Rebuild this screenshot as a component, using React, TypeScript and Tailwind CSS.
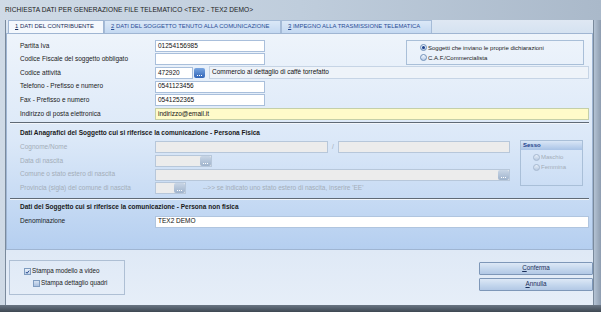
import React from "react";

const F = { fontFamily: '"Liberation Sans", Arial, sans-serif' };

function Input({ w, value, bg = "bg-white", border = "border-[#a9bfdb]", cls = "" }: { w?: string; value?: string; bg?: string; border?: string; cls?: string }) {
  return (
    <div className={`h-[12px] ${w ?? "flex-1"} ${bg} border ${border} flex items-center pl-[2px] text-[6.5px] text-[#111] leading-none ${cls}`}>
      {value}
    </div>
  );
}

function DotBtn({ disabled }: { disabled?: boolean }) {
  return (
    <div className={`w-[11px] h-[10px] rounded-[2px] flex items-end justify-center pb-[2px] ${disabled ? "bg-gradient-to-b from-[#c9d6e6] to-[#9fb3cc]" : "bg-gradient-to-b from-[#7aa6e0] to-[#2f64b8]"}`}>
      <div className="flex gap-[1px]">
        <div className="w-[1px] h-[1px] bg-white" />
        <div className="w-[1px] h-[1px] bg-white" />
        <div className="w-[1px] h-[1px] bg-white" />
      </div>
    </div>
  );
}

function Row({ label, children, disabled }: { label: string; children: React.ReactNode; disabled?: boolean }) {
  return (
    <div className="h-[13.6px] flex items-center">
      <div className={`w-[135px] text-[6.5px] leading-none ${disabled ? "text-[#a3adb8]" : "text-[#1a1a1a]"}`}>{label}</div>
      {children}
    </div>
  );
}

function Radio({ checked, disabled }: { checked?: boolean; disabled?: boolean }) {
  return (
    <div className={`w-[7px] h-[7px] rounded-full border ${disabled ? "border-[#a6b8cf] bg-gradient-to-b from-[#e6eef8] to-[#b9cbe2]" : "border-[#6e8fb8] bg-gradient-to-b from-[#f4f8fd] to-[#b7cbe6]"} flex items-center justify-center`}>
      {checked && <div className="w-[3px] h-[3px] rounded-full bg-[#1b3f8a]" />}
    </div>
  );
}

function Separator() {
  return (
    <div className="mx-[3px]">
      <div className="h-[1px] bg-[#5f6a76]" />
      <div className="h-[1px] bg-[#f2f6fb]" />
    </div>
  );
}

function Tab({ num, text, active, w }: { num: string; text: string; active?: boolean; w: string }) {
  return (
    <div
      className={`${w} h-[13px] flex items-center pl-[6px] text-[5.9px] leading-none border border-b-0 ${
        active ? "bg-[#f4f8fd] border-[#9fb5d2] text-[#1b2f5a]" : "bg-gradient-to-b from-[#dbe8f7] to-[#c3d8f1] border-[#a5bbd7] text-[#2a4e96] mt-[1px]"
      }`}
    >
      <span className="underline">{num}</span>
      <span>&nbsp;{text}</span>
    </div>
  );
}

export default function App() {
  return (
    <div style={F} className="w-[601px] h-[312px] overflow-hidden flex flex-col bg-gradient-to-r from-[#cfdae6] via-[#bfcddc] to-[#aab9ca]">
      {/* title bar */}
      <div className="h-[20px] flex items-center pl-[5px] text-[6.6px] text-[#1a1a1a] tracking-[0.05px]">
        RICHIESTA DATI PER GENERAZIONE FILE TELEMATICO &lt;TEX2 - TEX2 DEMO&gt;
      </div>
      <div className="flex-1 flex">
        {/* left frame */}
        <div className="w-[6px] flex">
          <div className="w-[5px]" />
          <div className="w-[1px] bg-[#7a8a9c]" />
        </div>
        <div className="w-[587px] flex flex-col bg-[#dde8f5]">
          {/* tabs */}
          <div className="h-[13px] flex items-end pl-[2px] bg-gradient-to-b from-[#dfe8f3] to-[#d5e2f1]">
            <Tab num="1" text="DATI DEL CONTRIBUENTE" active w="w-[96px]" />
            <Tab num="2" text="DATI DEL SOGGETTO TENUTO ALLA COMUNICAZIONE" w="w-[177px]" />
            <Tab num="3" text="IMPEGNO ALLA TRASMISSIONE TELEMATICA" w="w-[151px]" />
          </div>
          {/* panel */}
          <div className="h-[217px] border border-[#9fb5d2] bg-gradient-to-b from-[#eef4fb] via-[#dbe8f8] to-[#b5cff0] flex flex-col">
            {/* section 1 */}
            <div className="pl-[13px] pr-[3px] pt-[5px]">
              <div className="flex">
                <div className="flex flex-col">
                  <Row label="Partita Iva">
                    <Input w="w-[110px]" value="01254156985" />
                  </Row>
                  <Row label="Codice Fiscale del soggetto obbligato">
                    <Input w="w-[110px]" />
                  </Row>
                </div>
                <div className="ml-auto mr-[5px] mt-[1px] w-[178px] h-[25px] border border-[#a9bfd8] flex flex-col justify-center gap-[3px] pl-[13px]">
                  <div className="flex items-center gap-[1px] text-[6px] leading-none text-[#1a1a1a]">
                    <Radio checked />
                    <span>Soggetti che inviano le proprie dichiarazioni</span>
                  </div>
                  <div className="flex items-center gap-[1px] text-[6px] leading-none text-[#1a1a1a]">
                    <Radio />
                    <span>C.A.F./Commercialista</span>
                  </div>
                </div>
              </div>
              <Row label="Codice attività">
                <Input w="w-[38px]" value="472920" />
                <div className="ml-[1px] mr-[4px]"><DotBtn /></div>
                <div className="flex-1 h-[13px] -mt-[1px] border border-[#c6d4e5] bg-[#eef3f9] flex items-center pl-[2px] text-[6.5px] leading-none text-[#111]">
                  Commercio al dettaglio di caffè torrefatto
                </div>
              </Row>
              <Row label="Telefono - Prefisso e numero">
                <Input w="w-[110px]" value="0541123456" />
              </Row>
              <Row label="Fax - Prefisso e numero">
                <Input w="w-[110px]" value="0541252365" />
              </Row>
              <Row label="Indirizzo di posta elettronica">
                <Input bg="bg-[#fffbc9]" border="border-[#c4cfa8]" value="indirizzo@email.it" />
              </Row>
            </div>
            <div className="mt-[1px]"><Separator /></div>
            {/* section 2 */}
            <div className="pl-[13px] pr-[3px]">
              <div className="h-[19px] flex items-center text-[6.5px] font-bold leading-none text-[#1a1a1a]">
                Dati Anagrafici del Soggetto cui si riferisce la comunicazione - Persona Fisica
              </div>
              <div className="flex">
                <div className="w-[490px] flex flex-col -mt-[2px]">
                  <Row label="Cognome/Nome" disabled>
                    <Input w="w-[173px]" bg="bg-[#ececec]" border="border-[#b7c7da]" />
                    <div className="w-[10px] text-center text-[6.5px] text-[#a3adb8]">/</div>
                    <Input bg="bg-[#ececec]" border="border-[#b7c7da]" />
                  </Row>
                  <Row label="Data di nascita" disabled>
                    <div className="w-[57px] h-[12px] bg-[#ececec] border border-[#b7c7da] flex items-center justify-end pr-[0px]">
                      <DotBtn disabled />
                    </div>
                  </Row>
                  <Row label="Comune o stato estero di nascita" disabled>
                    <div className="flex-1 h-[12px] bg-[#ececec] border border-[#b7c7da] flex items-center justify-end">
                      <DotBtn disabled />
                    </div>
                  </Row>
                  <Row label="Provincia (sigla) del comune di nascita" disabled>
                    <div className="w-[31px] h-[12px] bg-[#ececec] border border-[#b7c7da] flex items-center justify-end">
                      <DotBtn disabled />
                    </div>
                    <div className="ml-[17px] text-[6.5px] leading-none text-[#a3adb8]">--&gt;&gt; se indicato uno stato estero di nascita, inserire 'EE'</div>
                  </Row>
                </div>
                <div className="ml-[10px] -mt-[3px] w-[63px] h-[46px] border border-[#a9bfd8] flex flex-col">
                  <div className="h-[9px] bg-gradient-to-b from-[#d9e6f6] to-[#a9c3e6] flex items-center pl-[2px] text-[6px] leading-none font-bold text-[#1b3f8a]">Sesso</div>
                  <div className="flex flex-col pl-[12px] pt-[4px] gap-[3px]">
                    <div className="flex items-center gap-[1px] text-[6px] leading-none text-[#a3adb8]">
                      <Radio disabled />
                      <span>Maschio</span>
                    </div>
                    <div className="flex items-center gap-[1px] text-[6px] leading-none text-[#a3adb8]">
                      <Radio disabled />
                      <span>Femmina</span>
                    </div>
                  </div>
                </div>
              </div>
            </div>
            <div className="mt-[3px]"><Separator /></div>
            {/* section 3 */}
            <div className="pl-[13px] pr-[3px]">
              <div className="h-[15px] flex items-center text-[6.5px] font-bold leading-none text-[#1a1a1a]">
                Dati del Soggetto cui si riferisce la comunicazione - Persona non fisica
              </div>
              <Row label="Denominazione">
                <Input value="TEX2 DEMO" border="border-[#b0c5df]" />
              </Row>
            </div>
          </div>
          {/* bottom area */}
          <div className="flex-1 flex items-start pt-[10px] pl-[3px] bg-gradient-to-b from-[#dfe9f6] to-[#e6eef8]">
            <div className="w-[116px] h-[35px] border border-[#aebfd4] flex flex-col justify-center pl-[14px] gap-[5px]">
              <div className="flex items-center gap-[1px] text-[6.3px] leading-none text-[#1a1a1a]">
                <div className="w-[7px] h-[7px] border border-[#7f9cc0] bg-gradient-to-b from-[#e9f0f9] to-[#c1d3ea] flex items-center justify-center">
                  <svg width="6" height="6" viewBox="0 0 6 6">
                    <path d="M1 3 L2.5 4.5 L5 1.3" stroke="#1b3f8a" strokeWidth="1.1" fill="none" />
                  </svg>
                </div>
                <span>Stampa modello a video</span>
              </div>
              <div className="flex items-center gap-[1px] ml-[9px] text-[6.3px] leading-none text-[#1a1a1a]">
                <div className="w-[7px] h-[7px] border border-[#7f9cc0] bg-gradient-to-b from-[#d5e1f1] to-[#a9c0df]" />
                <span>Stampa dettaglio quadri</span>
              </div>
            </div>
            <div className="ml-auto flex flex-col gap-[3px] pt-[2px] mr-[0px]">
              <div className="w-[114px] h-[13px] rounded-[1px] border border-[#7e97b8] bg-gradient-to-b from-[#dde8f6] via-[#c6d8ee] to-[#b2c8e5] flex items-center justify-center text-[6.3px] leading-none text-[#1b2f5a]">
                <span className="underline">C</span>onferma
              </div>
              <div className="w-[114px] h-[13px] rounded-[1px] border border-[#7e97b8] bg-gradient-to-b from-[#dde8f6] via-[#c6d8ee] to-[#b2c8e5] flex items-center justify-center text-[6.3px] leading-none text-[#1b2f5a]">
                <span className="underline">A</span>nnulla
              </div>
            </div>
          </div>
        </div>
        {/* right frame */}
        <div className="flex-1 flex">
          <div className="w-[1px] bg-[#7a8a9c]" />
          <div className="flex-1 bg-gradient-to-r from-[#b4c3d4] to-[#8e9db0]" />
        </div>
      </div>
      {/* bottom frame */}
      <div className="h-[7px] bg-gradient-to-b from-[#6a7684] to-[#3e4852]" />
    </div>
  );
}
